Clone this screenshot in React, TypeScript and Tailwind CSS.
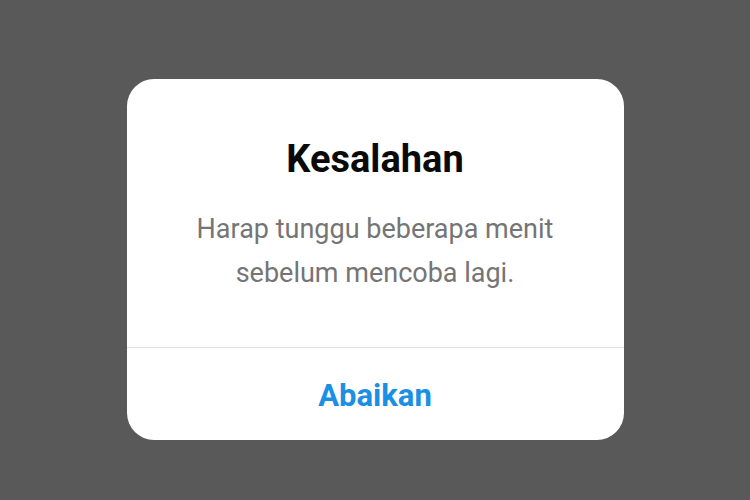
import React from 'react'

const App = () => {
    return (
        <div
            className="w-[750px] h-[500px] bg-[#595959] flex justify-center pt-[79px]"
            style={{ fontFamily: 'Roboto, "Noto Sans", sans-serif' }}
        >
            {/* Error dialog */}
            <div className="w-[497px] h-[361px] bg-white rounded-[27px] flex flex-col overflow-hidden">
                <div className="h-[268px] flex flex-col items-center pt-[58px]">
                    <h2 className="text-[38px] leading-[45px] font-bold text-[#0a0a0a]">Kesalahan</h2>
                    <p className="mt-[26px] text-[27px] leading-[43.5px] text-[#757575] text-center">
                        Harap tunggu beberapa menit
                        <br />
                        sebelum mencoba lagi.
                    </p>
                </div>
                <div className="h-px bg-[#e3e3e3]"></div>
                <button className="flex-1 flex items-center justify-center pt-1 text-[31px] font-bold text-[#1a8fe3]">
                    Abaikan
                </button>
            </div>
        </div>
    )
}

export default App
